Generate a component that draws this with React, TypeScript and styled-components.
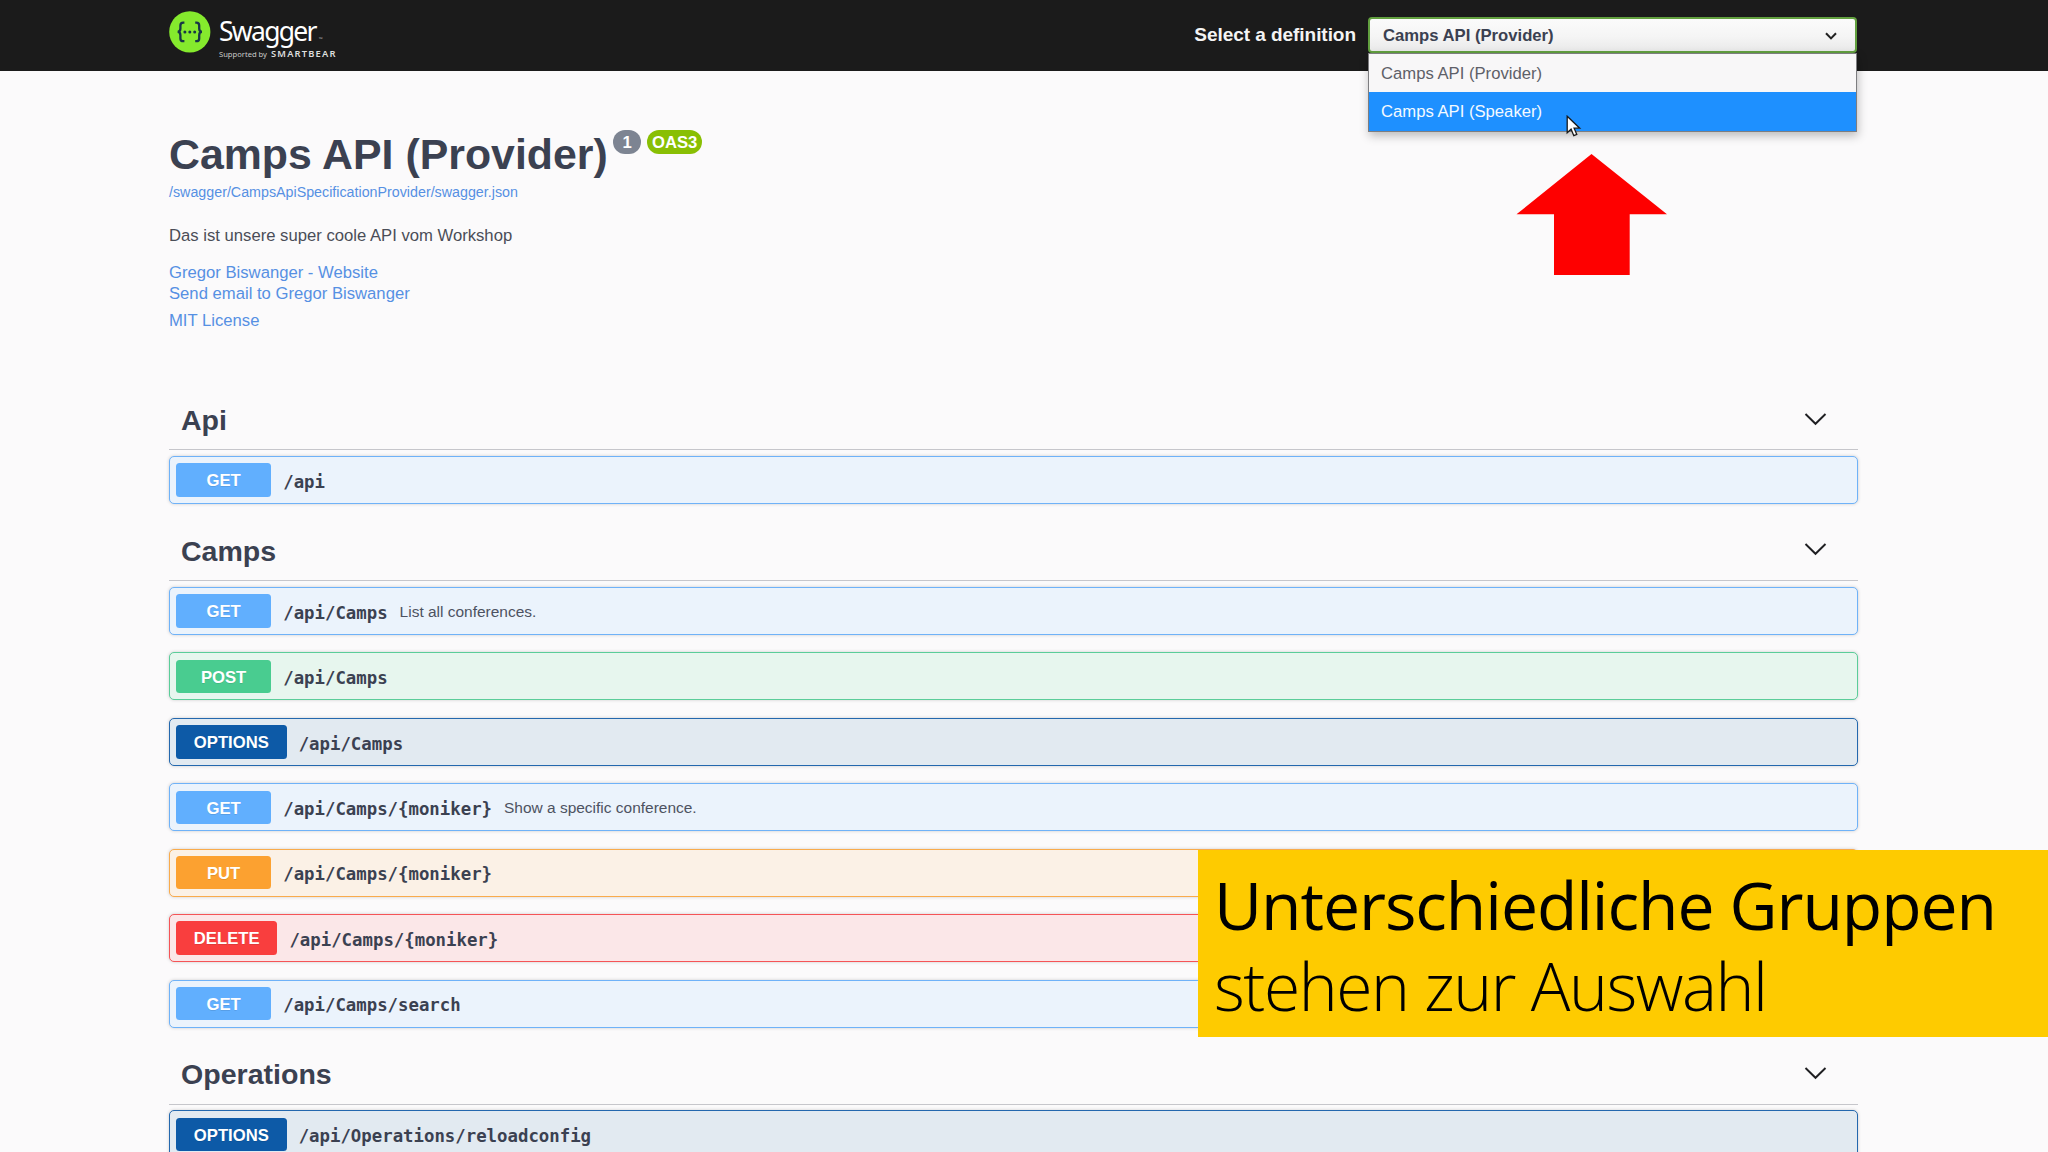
import React from "react";
import styled, { createGlobalStyle } from "styled-components";

const GlobalStyle = createGlobalStyle`
  *, *::before, *::after { box-sizing: border-box; }
  html, body { margin: 0; background: #fbfafb; }
  body {
    width: 2048px;
    height: 1152px;
    overflow: hidden;
    font-family: "Liberation Sans", Arial, sans-serif;
    color: #3b4151;
  }
`;

type Method = "get" | "post" | "options" | "put" | "delete";

const methodColors: Record<Method, { solid: string; edge: string; tint: string }> = {
  get: { solid: "#61affe", edge: "#6fb2f8", tint: "#ebf3fc" },
  post: { solid: "#49cc90", edge: "#5bcd99", tint: "#e7f6ee" },
  options: { solid: "#0d5aa7", edge: "#2468ae", tint: "#e2eaf1" },
  put: { solid: "#fca130", edge: "#f9ab4c", tint: "#fbf1e6" },
  delete: { solid: "#f93e3e", edge: "#f55457", tint: "#fbe7e8" },
};

const Page = styled.div`
  position: relative;
  width: 2048px;
  height: 1152px;
  overflow: hidden;
  background: #fbfafb;
`;

const Topbar = styled.header`
  height: 71px;
  padding: 0 191px 0 169px;
  display: flex;
  justify-content: space-between;
  background: #1b1b1b;
`;

const Brand = styled.div`
  display: flex;
  gap: 8px;
  padding-top: 11px;
`;

const BrandText = styled.div`
  display: flex;
  flex-direction: column;
  padding-top: 2px;
  font-family: "Noto Sans", "Open Sans", sans-serif;
  color: #fff;
`;

const BrandName = styled.div`
  height: 36px;
  line-height: 37px;
  font-size: 26.5px;
  letter-spacing: -1.7px;
  white-space: nowrap;
`;

const BrandMark = styled.span`
  padding-left: 3px;
  font-size: 5px;
  letter-spacing: 0;
  color: #aaa;
`;

const BrandBy = styled.div`
  display: flex;
  align-items: baseline;
  gap: 4px;
  height: 10px;
  line-height: 10px;
  font-size: 7.6px;
  color: #c9c9c9;
  white-space: nowrap;
`;

const BrandOwner = styled.span`
  font-size: 9.3px;
  font-weight: 600;
  letter-spacing: 1.2px;
  color: #dedede;
`;

const Definition = styled.div`
  display: flex;
  padding-top: 17px;
`;

const DefinitionLabel = styled.label`
  padding-right: 12px;
  line-height: 35px;
  font-size: 19.04px;
  font-weight: 700;
  letter-spacing: -0.06px;
  color: #f4f4f4;
  white-space: nowrap;
`;

const Select = styled.div`
  position: relative;
  width: 489px;
  height: 36px;
`;

const SelectBox = styled.div`
  display: flex;
  align-items: center;
  justify-content: space-between;
  height: 36px;
  padding: 1px 18px 0 13px;
  border: 2px solid #62a03f;
  border-radius: 4px;
  background: linear-gradient(#fbfbfb, #f5f5f5 55%, #e9e9e9);
  font-size: 16.66px;
  font-weight: 700;
  color: #3b4151;
`;

const Options = styled.div`
  position: absolute;
  z-index: 2;
  top: 36px;
  left: 0;
  width: 489px;
  border: 1px solid #7d7d80;
  background: #f8f7f8;
  box-shadow: 1px 4px 9px rgba(0, 0, 0, 0.25);
`;

const Option = styled.div<{ $active?: boolean }>`
  height: 38.4px;
  padding-left: 12px;
  line-height: 40px;
  font-size: 16.66px;
  color: ${(p) => (p.$active ? "#f4faff" : "#5e6068")};
  background: ${(p) => (p.$active ? "#1e90ff" : "transparent")};
`;

const Wrapper = styled.main`
  width: 1689px;
  margin-left: 169px;
`;

const Info = styled.section`
  height: 319.8px;
  padding-top: 58px;
`;

const TitleRow = styled.div`
  display: flex;
  align-items: flex-start;
  height: 54px;
`;

const Title = styled.h1`
  margin: 0 5.5px 0 0;
  line-height: 50px;
  font-size: 42.84px;
  font-weight: 700;
  color: #3b4151;
  white-space: nowrap;
`;

const Badges = styled.div`
  display: flex;
  gap: 6px;
  padding-top: 1px;
`;

const Badge = styled.span<{ $tone: string; $width: number }>`
  width: ${(p) => p.$width}px;
  height: 24px;
  border-radius: 12px;
  background: ${(p) => p.$tone};
  color: #fff;
  text-align: center;
  line-height: 25px;
  font-size: 16.66px;
  font-weight: 700;
`;

const SpecLink = styled.a`
  display: block;
  height: 18px;
  line-height: 18px;
  font-size: 14.28px;
  color: #5690e3;
`;

const Description = styled.p`
  margin: 24px 0 15px;
  line-height: 22px;
  font-size: 16.66px;
  color: #4a4d57;
`;

const InfoLink = styled.a<{ $gap?: number }>`
  display: block;
  margin-top: ${(p) => p.$gap ?? 0}px;
  line-height: 21px;
  font-size: 16.66px;
  color: #5690e3;
`;

const Tag = styled.section``;

const TagHeader = styled.h2`
  display: flex;
  align-items: center;
  justify-content: space-between;
  height: 59.6px;
  margin: 0 0 5.8px;
  padding: 1px 31.5px 0 12px;
  border-bottom: 1px solid #c6c6cb;
  font-size: 28.56px;
  font-weight: 700;
  color: #3b4151;
`;

const Block = styled.div<{ $method: Method }>`
  display: flex;
  align-items: center;
  height: 48px;
  margin-bottom: 17.43px;
  padding: 0 6px;
  border: 1px solid ${(p) => methodColors[p.$method].edge};
  border-radius: 5px;
  background: ${(p) => methodColors[p.$method].tint};
  box-shadow: 0 0 3.5px rgba(0, 0, 0, 0.19);
`;

const MethodLabel = styled.span<{ $method: Method }>`
  min-width: 95.2px;
  height: 33.4px;
  padding: 0 17.85px;
  border-radius: 3.5px;
  background: ${(p) => methodColors[p.$method].solid};
  color: #fff;
  text-align: center;
  line-height: 35px;
  font-size: 16.66px;
  font-weight: 700;
  text-shadow: 0 1px 0 rgba(0, 0, 0, 0.1);
`;

const Path = styled.span`
  padding: 3.4px 12px 0;
  font-family: "DejaVu Sans Mono", monospace;
  font-size: 17.35px;
  font-weight: 700;
  color: #3b4151;
  white-space: nowrap;
`;

const Summary = styled.span`
  padding-top: 1.4px;
  font-size: 15.47px;
  color: #4d5261;
`;

const Banner = styled.aside`
  position: absolute;
  top: 850px;
  left: 1198px;
  width: 850px;
  height: 187px;
  padding: 14px 0 0 16px;
  background: #fecb00;
  font-family: "Open Sans", "Noto Sans", sans-serif;
  color: #000;
  white-space: nowrap;
`;

const BannerTitle = styled.div`
  height: 81px;
  line-height: 80px;
  font-size: 66px;
  font-weight: 400;
  letter-spacing: -1.05px;
`;

const BannerText = styled.div`
  height: 82px;
  line-height: 81px;
  font-size: 66px;
  font-weight: 300;
  letter-spacing: -1.45px;
`;

const ArrowShape = styled.svg`
  position: absolute;
  left: 1516px;
  top: 154px;
`;

const Pointer = styled.svg`
  position: absolute;
  z-index: 3;
  left: 1566px;
  top: 115px;
`;

const Logo = () => (
  <svg width="42" height="42" viewBox="0 0 42 42">
    <circle cx="20.8" cy="20.9" r="20.6" fill="#85ea2d" />
    <g fill="none" stroke="#173647" strokeWidth="2.3">
      <path d="M15.4 11.6h-1.2c-2 0-2.8 1-2.8 2.8v3.2c0 2-.8 3.3-2.8 3.3 2 0 2.8 1.3 2.8 3.3v3.2c0 1.8.8 2.8 2.8 2.8h1.2" />
      <path d="M26.2 11.6h1.2c2 0 2.8 1 2.8 2.8v3.2c0 2 .8 3.3 2.8 3.3-2 0-2.8 1.3-2.8 3.3v3.2c0 1.8-.8 2.8-2.8 2.8h-1.2" />
    </g>
    <g fill="#173647">
      <circle cx="15.9" cy="20.9" r="1.5" />
      <circle cx="20.8" cy="20.9" r="1.5" />
      <circle cx="25.7" cy="20.9" r="1.5" />
    </g>
  </svg>
);

const SelectChevron = () => (
  <svg width="12" height="8" viewBox="0 0 12 8">
    <path d="M1 1.2 6 6.4 11 1.2" fill="none" stroke="#222" strokeWidth="2" />
  </svg>
);

const TagChevron = () => (
  <svg width="23" height="16" viewBox="0 0 23 16">
    <path d="M1.5 1 11.5 10.8 21.5 1" fill="none" stroke="#1f1f22" strokeWidth="1.9" />
  </svg>
);

interface Operation {
  method: Method;
  path: string;
  summary?: string;
}

const tags: { name: string; operations: Operation[] }[] = [
  { name: "Api", operations: [{ method: "get", path: "/api" }] },
  {
    name: "Camps",
    operations: [
      { method: "get", path: "/api/Camps", summary: "List all conferences." },
      { method: "post", path: "/api/Camps" },
      { method: "options", path: "/api/Camps" },
      { method: "get", path: "/api/Camps/{moniker}", summary: "Show a specific conference." },
      { method: "put", path: "/api/Camps/{moniker}" },
      { method: "delete", path: "/api/Camps/{moniker}" },
      { method: "get", path: "/api/Camps/search" },
    ],
  },
  { name: "Operations", operations: [{ method: "options", path: "/api/Operations/reloadconfig" }] },
];

export default function App() {
  return (
    <Page>
      <GlobalStyle />
      <Topbar>
        <Brand>
          <Logo />
          <BrandText>
            <BrandName>
              Swagger<BrandMark>™</BrandMark>
            </BrandName>
            <BrandBy>
              Supported by <BrandOwner>SMARTBEAR</BrandOwner>
            </BrandBy>
          </BrandText>
        </Brand>
        <Definition>
          <DefinitionLabel>Select a definition</DefinitionLabel>
          <Select>
            <SelectBox>
              Camps API (Provider)
              <SelectChevron />
            </SelectBox>
            <Options>
              <Option>Camps API (Provider)</Option>
              <Option $active>Camps API (Speaker)</Option>
            </Options>
          </Select>
        </Definition>
      </Topbar>
      <Wrapper>
        <Info>
          <TitleRow>
            <Title>Camps API (Provider)</Title>
            <Badges>
              <Badge $tone="#7d8492" $width={28}>1</Badge>
              <Badge $tone="#89bf04" $width={55}>OAS3</Badge>
            </Badges>
          </TitleRow>
          <SpecLink>/swagger/CampsApiSpecificationProvider/swagger.json</SpecLink>
          <Description>Das ist unsere super coole API vom Workshop</Description>
          <InfoLink>Gregor Biswanger - Website</InfoLink>
          <InfoLink>Send email to Gregor Biswanger</InfoLink>
          <InfoLink $gap={6}>MIT License</InfoLink>
        </Info>
        {tags.map((tag) => (
          <Tag key={tag.name}>
            <TagHeader>
              {tag.name}
              <TagChevron />
            </TagHeader>
            {tag.operations.map((op) => (
              <Block key={op.method + op.path} $method={op.method}>
                <MethodLabel $method={op.method}>{op.method.toUpperCase()}</MethodLabel>
                <Path>{op.path}</Path>
                {op.summary && <Summary>{op.summary}</Summary>}
              </Block>
            ))}
          </Tag>
        ))}
      </Wrapper>
      <Pointer width="17" height="23" viewBox="0 0 17 23">
        <path
          d="M1.2 1.2v16.6l3.9-3.6 2.7 6.5 3-1.3-2.7-6.2h5.6z"
          fill="#fff"
          stroke="#1a1a1a"
          strokeWidth="1.3"
        />
      </Pointer>
      <ArrowShape width="152" height="121" viewBox="0 0 152 121">
        <path d="M75.5 0 151 60.3H113.7V121H38V60.3H.5z" fill="#fe0000" />
      </ArrowShape>
      <Banner>
        <BannerTitle>Unterschiedliche Gruppen</BannerTitle>
        <BannerText>stehen zur Auswahl</BannerText>
      </Banner>
    </Page>
  );
}
